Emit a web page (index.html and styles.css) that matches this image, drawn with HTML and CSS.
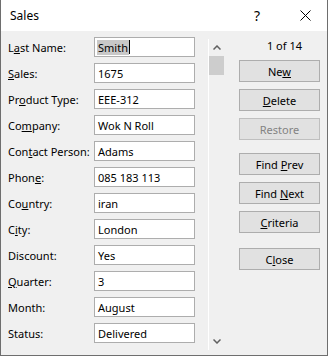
FILE: index.html
```html
<!DOCTYPE html>
<html lang="en">
<head>
    <meta charset="UTF-8">
    <title>Sales</title>
    <link rel="stylesheet" href="styles.css">
</head>
<body>
    <div class="dialog">
        <div class="titlebar">
            <span class="title">Sales</span>
            <span class="help">?</span>
            <span class="close">
                <svg width="11" height="11" viewBox="0 0 11 11">
                    <path d="M0.5 0.5 L10.5 10.5 M10.5 0.5 L0.5 10.5" stroke="#000" stroke-width="1" fill="none"/>
                </svg>
            </span>
        </div>

        <div class="body">
            <div class="fields">
                <div class="row"><span class="label">L<u>a</u>st Name:</span><div class="value"><span class="selected">Smith</span><span class="caret"></span></div></div>
                <div class="row"><span class="label"><u>S</u>ales:</span><div class="value">1675</div></div>
                <div class="row"><span class="label">Pr<u>o</u>duct Type:</span><div class="value">EEE-312</div></div>
                <div class="row"><span class="label">Co<u>m</u>pany:</span><div class="value">Wok N Roll</div></div>
                <div class="row"><span class="label">Con<u>t</u>act Person:</span><div class="value">Adams</div></div>
                <div class="row"><span class="label">Phon<u>e</u>:</span><div class="value">085 183 113</div></div>
                <div class="row"><span class="label">Co<u>u</u>ntry:</span><div class="value">iran</div></div>
                <div class="row"><span class="label">C<u>i</u>ty:</span><div class="value">London</div></div>
                <div class="row"><span class="label">Discount:</span><div class="value">Yes</div></div>
                <div class="row"><span class="label"><u>Q</u>uarter:</span><div class="value">3</div></div>
                <div class="row"><span class="label">Month:</span><div class="value">August</div></div>
                <div class="row"><span class="label">Status:</span><div class="value">Delivered</div></div>
            </div>

            <div class="scrollbar">
                <div class="arrow">
                    <svg width="8" height="5" viewBox="0 0 8 5"><path d="M0.5 4.5 L4 1 L7.5 4.5" stroke="#606060" stroke-width="1.5" fill="none"/></svg>
                </div>
                <div class="thumb"></div>
                <div class="track"></div>
                <div class="arrow">
                    <svg width="8" height="5" viewBox="0 0 8 5"><path d="M0.5 0.5 L4 4 L7.5 0.5" stroke="#606060" stroke-width="1.5" fill="none"/></svg>
                </div>
            </div>

            <div class="actions">
                <div class="counter">1 of 14</div>
                <button class="btn">Ne<u>w</u></button>
                <button class="btn"><u>D</u>elete</button>
                <button class="btn disabled">Restore</button>
                <button class="btn group">Find <u>P</u>rev</button>
                <button class="btn">Find <u>N</u>ext</button>
                <button class="btn"><u>C</u>riteria</button>
                <button class="btn last">C<u>l</u>ose</button>
            </div>
        </div>
    </div>
</body>
</html>
```

FILE: styles.css
```css
body {
    margin: 0;
    padding: 0;
    background-color: #fff;
    font-family: 'Noto Sans', 'Open Sans', sans-serif;
    font-size: 11px;
    color: #000;
}

.dialog {
    width: 326px;
    height: 355px;
    border: 1px solid #6e6e6e;
    border-top: none;
    background-color: #f0f0f0;
    display: flex;
    flex-direction: column;
}

.titlebar {
    height: 31px;
    background-color: #fff;
    display: flex;
    align-items: center;
    padding-left: 9px;
}

.title {
    flex: 1;
    font-size: 12px;
}

.help {
    font-size: 14px;
    width: 10px;
    margin-right: 36px;
}

.close {
    width: 11px;
    height: 11px;
    margin-right: 16px;
    display: flex;
}

.body {
    flex: 1;
    display: flex;
    padding: 6px 0 0 7px;
}

.fields {
    width: 187px;
}

.row {
    display: flex;
    align-items: center;
    height: 20px;
    margin-bottom: 6px;
}

.label {
    width: 86px;
    white-space: nowrap;
}

u {
    text-underline-offset: 1px;
}

.value {
    width: 101px;
    height: 20px;
    box-sizing: border-box;
    border: 1px solid #adadad;
    background-color: #fff;
    padding-left: 3px;
    display: flex;
    align-items: center;
    white-space: nowrap;
}

.selected {
    background-color: #c8c8c8;
    padding: 0 1px 0 1px;
    margin-left: -1px;
    line-height: 15px;
}

.caret {
    width: 1px;
    height: 14px;
    background-color: #000;
}

.scrollbar {
    width: 16px;
    height: 311px;
    margin: 2px 0 0 13px;
    border-left: 1px solid #fff;
    display: flex;
    flex-direction: column;
}

.arrow {
    height: 17px;
    display: flex;
    align-items: center;
    justify-content: center;
}

.thumb {
    width: 15px;
    height: 19px;
    background-color: #cdcdcd;
}

.track {
    flex: 1;
}

.actions {
    width: 81px;
    margin-left: 14px;
    display: flex;
    flex-direction: column;
}

.counter {
    height: 16px;
    line-height: 16px;
    margin: 1px 0 6px 0;
    padding-left: 10px;
    text-align: center;
}

.btn {
    height: 22px;
    margin: 0 0 7px 0;
    padding: 0;
    border: 1px solid #adadad;
    background-color: #e1e1e1;
    font-family: inherit;
    font-size: 11px;
    color: #000;
}

.btn.disabled {
    border-color: #bfbfbf;
    color: #838383;
}

.btn.group {
    margin-top: 6px;
}

.btn.last {
    margin-top: 8px;
}
```
